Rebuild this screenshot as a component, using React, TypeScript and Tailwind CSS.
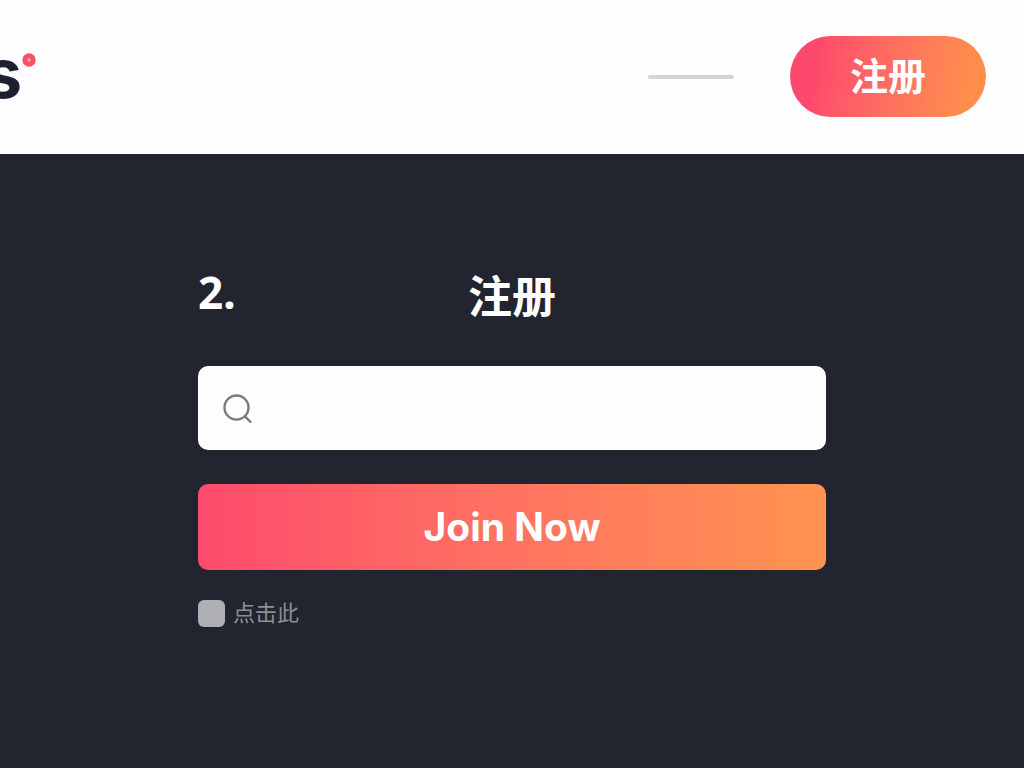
import { useState } from "react";

export default function App() {
  return (
    <div className="flex min-h-screen w-full flex-col overflow-x-hidden bg-[#22242f] font-[Inter,'Noto_Sans_CJK_SC',sans-serif]">
      <TopBar />
      <SignUp />
    </div>
  );
}

function TopBar() {
  return (
    <header className="flex items-center justify-between bg-[#fdfdfd] pt-9 pb-[37px] pr-[38px]">
      <Logo />
      <div className="flex items-center gap-14">
        <div className="h-1 w-[86px] rounded-full bg-[#d4d4d6]" />
        <button
          type="button"
          className="rounded-full bg-linear-100 from-[#fd4a6c] from-15% to-[#ff8e4c] to-90% px-[60px] py-4 text-[38px] leading-[49px] font-bold text-white"
        >
          注册
        </button>
      </div>
    </header>
  );
}

function Logo() {
  return (
    <a href="#" className="-ml-4 flex items-start pb-2 text-[#1c2130]">
      <span className="text-[68px] leading-[72px] font-bold">s</span>
      <svg viewBox="0 0 14 14" className="mt-4 size-3.5" aria-hidden="true">
        <circle cx="7" cy="7" r="4.4" fill="#ffb0ba" />
        <circle cx="7" cy="7" r="4.2" fill="none" stroke="#fb5068" strokeWidth="5" />
      </svg>
    </a>
  );
}

function SearchIcon() {
  return (
    <svg
      viewBox="0 0 32 32"
      className="size-8 shrink-0 text-[#777a80]"
      fill="none"
      stroke="currentColor"
      strokeWidth="2.4"
      strokeLinecap="round"
      aria-hidden="true"
    >
      <circle cx="14.5" cy="15.5" r="12" />
      <path d="M23 24.5l5.5 5.5" />
    </svg>
  );
}

function SignUp() {
  const [query, setQuery] = useState("");
  const [agreed, setAgreed] = useState(false);

  return (
    <main className="mx-auto w-full max-w-[628px] grow pt-28 pb-16">
      <h1 className="grid grid-cols-3 font-['Noto_Sans','Noto_Sans_CJK_SC',sans-serif] text-[44px] leading-[60px] font-bold text-white">
        <span className="leading-[52px]">2.</span>
        <span className="text-center">注册</span>
      </h1>

      <form onSubmit={(e) => e.preventDefault()}>
        <label className="mt-10 flex h-[84px] items-center gap-4 rounded-[10px] bg-[#fdfdfd] px-6">
          <SearchIcon />
          <input
            type="text"
            aria-label="注册"
            value={query}
            onChange={(e) => setQuery(e.target.value)}
            className="h-full w-full bg-transparent text-2xl text-[#22242f] outline-none"
          />
        </label>

        <button
          type="submit"
          className="mt-[34px] h-[86px] w-full rounded-[10px] bg-linear-to-r from-[#fd4a6c] to-[#ff934f] text-[39px] font-bold text-white"
        >
          Join Now
        </button>

        <label className="mt-[30px] flex items-center gap-2 text-[22px] leading-[27px] text-[#8d8f96]">
          <input
            type="checkbox"
            checked={agreed}
            onChange={(e) => setAgreed(e.target.checked)}
            className="size-[27px] appearance-none rounded-md bg-[#adafb5] checked:bg-[#fd4a6c]"
          />
          点击此
        </label>
      </form>
    </main>
  );
}
